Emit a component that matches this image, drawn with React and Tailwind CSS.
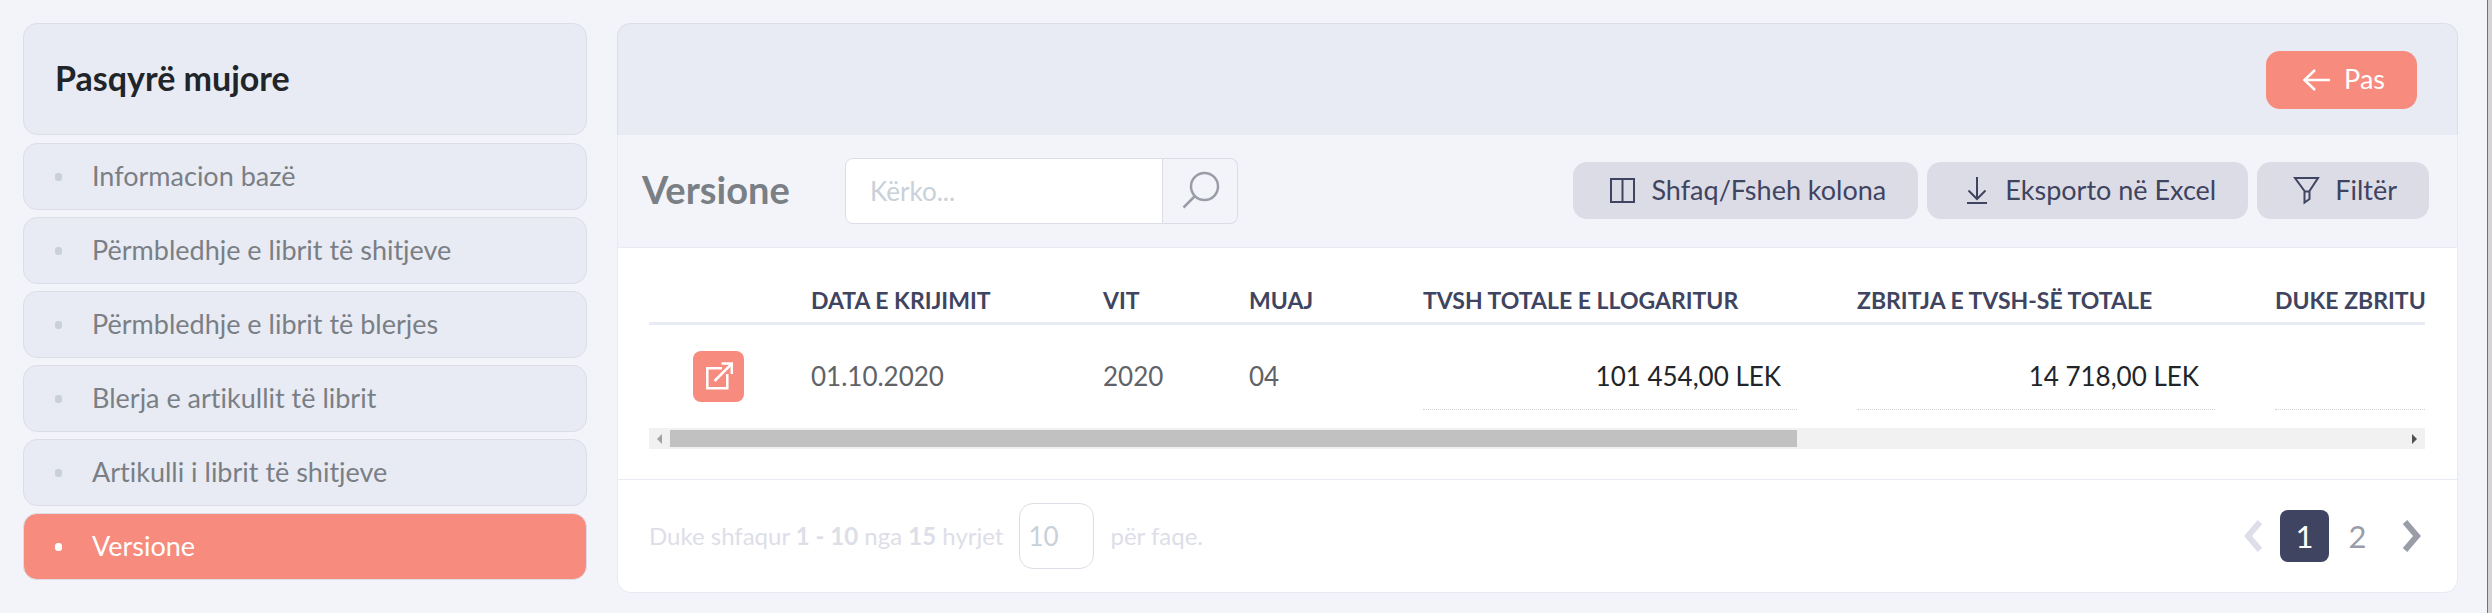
import React from "react";

const menu = [
  "Informacion bazë",
  "Përmbledhje e librit të shitjeve",
  "Përmbledhje e librit të blerjes",
  "Blerja e artikullit të librit",
  "Artikulli i librit të shitjeve",
  "Versione",
];

function Sidebar() {
  return (
    <aside className="w-[564px] shrink-0">
      <div className="flex h-28 items-center rounded-[14px] border border-[#dddde8] bg-[#e8ebf4] px-[31px] pb-1">
        <h1 className="text-[34px] font-bold text-[#212529]">Pasqyrë mujore</h1>
      </div>
      <nav className="mt-2 flex flex-col gap-[7px]">
        {menu.map((label) => {
          const active = label === "Versione";
          return (
            <a
              key={label}
              href="#"
              aria-current={active ? "page" : undefined}
              className={
                active
                  ? "flex h-[67px] items-center gap-[30px] rounded-[14px] border border-[#dddde8] bg-[#f78b7d] px-[31px] text-[27px] text-white"
                  : "flex h-[67px] items-center gap-[30px] rounded-[14px] border border-[#dddde8] bg-[#e8ebf4] px-[31px] text-[27px] text-[#7a7f85]"
              }
            >
              <span
                className={
                  active
                    ? "h-2 w-[7px] shrink-0 rounded-[3px] bg-white"
                    : "h-2 w-[7px] shrink-0 rounded-[3px] bg-[#c8d1d8]"
                }
              />
              {label}
            </a>
          );
        })}
      </nav>
    </aside>
  );
}

function ToolButton({ icon, children }) {
  return (
    <button
      type="button"
      className="flex h-[57px] items-center gap-[14px] rounded-[14px] bg-[#dcdce6] px-8 text-[27px] text-[#3f4460]"
    >
      {icon}
      {children}
    </button>
  );
}

const ColumnsIcon = () => (
  <svg width="32" height="32" viewBox="0 0 32 32" fill="none" stroke="currentColor" strokeWidth="2" aria-hidden="true">
    <path d="M6 5h23v23H6zM17.500 5v23" />
  </svg>
);
const DownloadIcon = () => (
  <svg width="32" height="32" viewBox="0 0 32 32" fill="none" stroke="currentColor" strokeWidth="2" aria-hidden="true">
    <path d="M18 3v22M9.500 16.500l8.500 8.500 8.500-8.500M8 29h20" />
  </svg>
);
const FilterIcon = () => (
  <svg width="32" height="32" viewBox="0 0 32 32" fill="none" stroke="currentColor" strokeWidth="2" aria-hidden="true">
    <path d="M6 4h23l-8.500 13v8l-5 3.500V17zM14.500 17.500h6.500" />
  </svg>
);

const columns = [
  ["DATA E KRIJIMIT", "w-[292px]"],
  ["VIT", "w-[146px]"],
  ["MUAJ", "w-[174px]"],
  ["TVSH TOTALE E LLOGARITUR", "w-[434px]"],
  ["ZBRITJA E TVSH-SË TOTALE", "w-[418px]"],
  ["DUKE ZBRITU", "w-[434px]"],
];

function VersionsTable() {
  return (
    <div className="overflow-hidden">
      <table className="w-[2030px] table-fixed border-collapse text-left">
        <thead>
          <tr className="h-[52px] border-b-[3px] border-[#e8ebf4] text-[23px] text-[#3f4460]">
            <th className="w-[132px]" aria-label="Hap" />
            {columns.map(([label, width]) => (
              <th key={label} className={`${width} px-[30px] pt-2 font-bold whitespace-nowrap`}>
                {label}
              </th>
            ))}
          </tr>
        </thead>
        <tbody>
          <tr className="h-[105px] text-[26px] text-[#5f6368]">
            <td className="pl-11">
              <button
                type="button"
                aria-label="Hap versionin"
                className="flex size-[51px] items-center justify-center rounded-lg bg-[#f78b7d] text-white"
              >
                <svg width="30" height="30" viewBox="0 0 30 30" fill="none" stroke="currentColor" strokeWidth="2.500" aria-hidden="true">
                  <path d="M18 7.300H3.300v20h20V13M10.500 20L27 3.500M17.500 2.600h10.300v10.500" />
                </svg>
              </button>
            </td>
            <td className="px-[30px]">01.10.2020</td>
            <td className="px-[30px]">2020</td>
            <td className="px-[30px]">04</td>
            {["101 454,00 LEK", "14 718,00 LEK", ""].map((value, i) => (
              <td key={i} className="px-[30px] align-top text-[#212529]">
                <div className="flex h-[85px] items-center justify-end border-b border-dotted border-[#d2d2d6] px-4 pt-5">
                  {value}
                </div>
              </td>
            ))}
          </tr>
        </tbody>
      </table>
      <div className="flex h-[21px] items-center bg-[#f1f1f1]" aria-hidden="true">
        <div className="flex w-[21px] shrink-0 justify-center">
          <svg width="5" height="10" viewBox="0 0 5 10" fill="#a3a3a3"><path d="M5 0v10L0 5z" /></svg>
        </div>
        <div className="flex-1">
          <div className="h-[17px] w-[65%] bg-[#c1c1c1]" />
        </div>
        <div className="flex w-[21px] shrink-0 justify-center">
          <svg width="5" height="10" viewBox="0 0 5 10" fill="#505050"><path d="M0 0v10l5-5z" /></svg>
        </div>
      </div>
    </div>
  );
}

function Footer() {
  return (
    <footer className="flex h-[113px] items-center justify-between border-t border-[#e8ebf4] pr-9 pl-[31px]">
      <label className="flex items-center text-2xl text-[#dddee8]">
        <span>
          Duke shfaqur <b>1 - 10</b> nga <b>15</b> hyrjet
        </span>
        <input
          type="text"
          defaultValue="10"
          className="mx-4 h-[66px] w-[75px] rounded-[14px] border border-[#dddde8] bg-white px-2 text-[26px] text-[#c8d1d8]"
        />
        <span>për faqe.</span>
      </label>
      <nav className="flex items-center text-[31px]">
        <button type="button" aria-label="Faqja e mëparshme" className="mr-[18px] text-[#dddee8]">
          <svg width="18" height="32" viewBox="0 0 18 32" fill="none" stroke="currentColor" strokeWidth="6" aria-hidden="true">
            <path d="M16 2L4 16l12 14" />
          </svg>
        </button>
        <button type="button" aria-current="page" className="h-[52px] w-[49px] rounded-lg bg-[#3f4460] text-white">1</button>
        <button type="button" className="h-[52px] w-[57px] text-[#9a9da8]">2</button>
        <button type="button" aria-label="Faqja tjetër" className="ml-[17px] text-[#9a9da8]">
          <svg width="18" height="32" viewBox="0 0 18 32" fill="none" stroke="currentColor" strokeWidth="6" aria-hidden="true">
            <path d="M2 2l12 14L2 30" />
          </svg>
        </button>
      </nav>
    </footer>
  );
}

export default function App() {
  return (
    <div className="flex min-h-screen bg-[#f3f4f9] font-['Lato','Noto_Sans',sans-serif] [font-variant-ligatures:none]">
      <div className="flex min-w-0 flex-1 items-start gap-[30px] pt-[23px] pr-[29px] pb-5 pl-[23px]">
        <Sidebar />
        <main className="min-w-0 flex-1">
          <header className="flex h-28 items-center justify-end rounded-t-[14px] border border-b-0 border-[#dddde8] bg-[#e8ebf4] pr-10">
            <button
              type="button"
              className="flex h-[58px] items-center gap-3 rounded-[14px] bg-[#f78b7d] px-8 text-[27px] text-white"
            >
              <svg width="34" height="32" viewBox="0 0 34 32" fill="none" stroke="currentColor" strokeWidth="2.500" aria-hidden="true">
                <path d="M32 16H6M17 6L6.500 16 17 26" />
              </svg>
              Pas
            </button>
          </header>
          <section className="rounded-b-[14px] border border-t-0 border-[#e8ebf4] bg-white">
            <div className="flex h-[113px] items-center border-b border-[#e8ebf4] bg-[#f3f4f9] pr-7 pl-6">
              <h2 className="w-[203px] pb-1 text-[38px] leading-[48px] font-bold text-[#7a7f85]">Versione</h2>
              <form className="flex h-[66px]" role="search" onSubmit={(e) => e.preventDefault()}>
                <input
                  type="search"
                  aria-label="Kërko"
                  placeholder="Kërko..."
                  className="w-[318px] rounded-l-lg border border-[#dcdce6] bg-white pl-6 text-[26px] placeholder:text-[#c8d1d8]"
                />
                <button
                  type="submit"
                  aria-label="Kërko"
                  className="flex w-[75px] items-center justify-center rounded-r-lg border border-l-0 border-[#dcdce6] text-[#9a9da8]"
                >
                  <svg width="40" height="40" viewBox="0 0 40 40" fill="none" stroke="currentColor" strokeWidth="2.500" aria-hidden="true">
                    <circle cx="24.500" cy="15.500" r="13.500" />
                    <path d="M15 25L3.500 36.500" />
                  </svg>
                </button>
              </form>
              <div className="ml-auto flex gap-[9px] pb-0.5">
                <ToolButton icon={<ColumnsIcon />}>Shfaq/Fsheh kolona</ToolButton>
                <ToolButton icon={<DownloadIcon />}>Eksporto në Excel</ToolButton>
                <ToolButton icon={<FilterIcon />}>Filtër</ToolButton>
              </div>
            </div>
            <div className="pt-[23px] pr-8 pb-[30px] pl-[31px]">
              <VersionsTable />
            </div>
            <Footer />
          </section>
        </main>
      </div>
      <div className="w-[5px] shrink-0 border-l border-[#76727a] bg-[#d6d3d6]" />
    </div>
  );
}
